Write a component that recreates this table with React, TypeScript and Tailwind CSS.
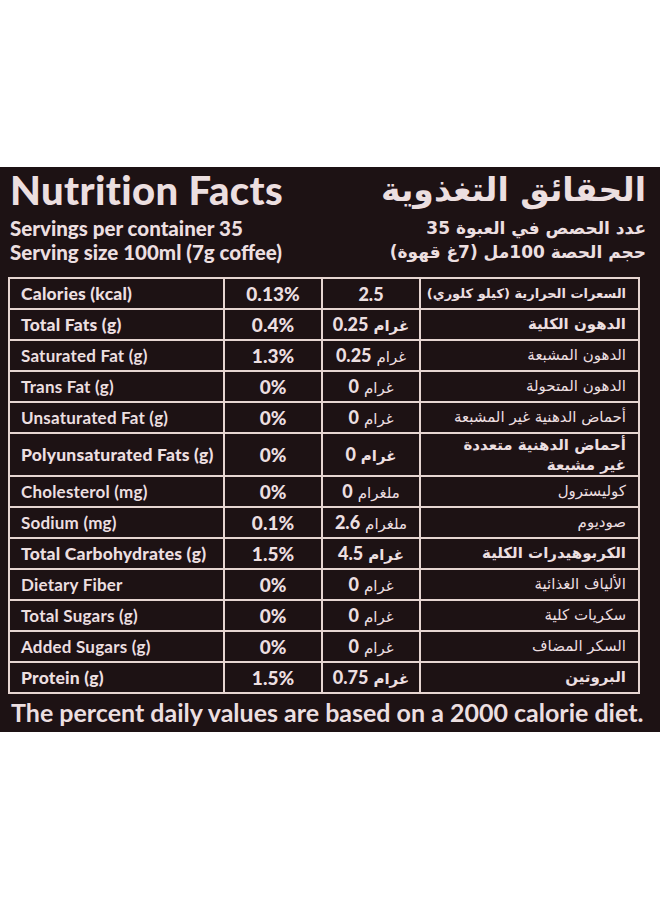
const rows = [
    { en: 'Calories (kcal)', pct: '0.13%', val: '2.5', unit: '', ar: 'السعرات الحرارية (كيلو كلوري)', bold: true },
    { en: 'Total Fats (g)', pct: '0.4%', val: '0.25', unit: 'غرام', ar: 'الدهون الكلية', bold: true },
    { en: 'Saturated Fat (g)', pct: '1.3%', val: '0.25', unit: 'غرام', ar: 'الدهون المشبعة', bold: false },
    { en: 'Trans Fat (g)', pct: '0%', val: '0', unit: 'غرام', ar: 'الدهون المتحولة', bold: false },
    { en: 'Unsaturated Fat (g)', pct: '0%', val: '0', unit: 'غرام', ar: 'أحماض الدهنية غير المشبعة', bold: false },
    { en: 'Polyunsaturated Fats (g)', pct: '0%', val: '0', unit: 'غرام', ar: 'أحماض الدهنية متعددة غير مشبعة', bold: true, tall: true },
    { en: 'Cholesterol (mg)', pct: '0%', val: '0', unit: 'ملغرام', ar: 'كوليسترول', bold: false },
    { en: 'Sodium (mg)', pct: '0.1%', val: '2.6', unit: 'ملغرام', ar: 'صوديوم', bold: false },
    { en: 'Total Carbohydrates (g)', pct: '1.5%', val: '4.5', unit: 'غرام', ar: 'الكربوهيدرات الكلية', bold: true },
    { en: 'Dietary Fiber', pct: '0%', val: '0', unit: 'غرام', ar: 'الألياف الغذائية', bold: false },
    { en: 'Total Sugars (g)', pct: '0%', val: '0', unit: 'غرام', ar: 'سكريات كلية', bold: false },
    { en: 'Added Sugars (g)', pct: '0%', val: '0', unit: 'غرام', ar: 'السكر المضاف', bold: false },
    { en: 'Protein (g)', pct: '1.5%', val: '0.75', unit: 'غرام', ar: 'البروتين', bold: true },
];

const latin = { fontFamily: 'Lato, "DejaVu Sans", sans-serif' };
const arabic = { fontFamily: '"DejaVu Sans", sans-serif' };

export default function App() {
    return (
        <div className="w-[660px] h-[900px] bg-white pt-[167px]">
            <div className="h-[565px] overflow-hidden bg-[#1d1214] text-[#ecdfe0]">
                {/* header */}
                <div className="flex justify-between px-[10px] pt-[1px]">
                    <div style={latin}>
                        <div className="text-[40px] font-black leading-[44px] tracking-[0.4px]">Nutrition Facts</div>
                        <div className="mt-[4px] text-[20.5px] font-black leading-[24px]">Servings per container 35</div>
                        <div className="text-[20.5px] font-black leading-[24px]">Serving size 100ml (7g coffee)</div>
                    </div>
                    <div dir="rtl" style={arabic} className="pr-[4px]">
                        <div className="text-[33px] font-bold leading-[44px]">الحقائق التغذوية</div>
                        <div className="mt-[4px] text-[17px] font-bold leading-[24px]">عدد الحصص في العبوة 35</div>
                        <div className="text-[17px] font-bold leading-[24px]">حجم الحصة 100مل (7غ قهوة)</div>
                    </div>
                </div>

                {/* table */}
                <table className="mx-[8px] mt-[13px] w-[630px] table-fixed border-collapse border-2 border-[#e6d5d1]">
                    <colgroup>
                        <col className="w-[215px]" />
                        <col className="w-[98px]" />
                        <col className="w-[98px]" />
                        <col className="w-[219px]" />
                    </colgroup>
                    <tbody>
                        {rows.map((r) => (
                            <tr key={r.en} className={r.tall ? 'h-[43px]' : 'h-[31px]'}>
                                <td
                                    style={latin}
                                    className={`border-2 border-[#e6d5d1] pl-[11px] leading-none whitespace-nowrap ${
                                        r.bold ? 'text-[17.5px] font-black tracking-[0.2px]' : 'text-[17px] font-bold tracking-[0.2px]'
                                    }`}
                                >
                                    {r.en}
                                </td>
                                <td style={latin} className="border-2 border-[#e6d5d1] text-center text-[19px] font-black leading-none">
                                    {r.pct}
                                </td>
                                <td className="border-2 border-[#e6d5d1] text-center leading-none whitespace-nowrap">
                                    <span style={latin} className="text-[18px] font-black">
                                        {r.val}
                                    </span>
                                    {r.unit && (
                                        <span style={arabic} className={`ml-[5px] text-[15px] ${r.bold ? 'font-bold' : 'font-normal'}`}>
                                            {r.unit}
                                        </span>
                                    )}
                                </td>
                                <td
                                    dir="rtl"
                                    style={arabic}
                                    className={`border-2 border-[#e6d5d1] pr-[12px] whitespace-nowrap ${
                                        r.bold ? 'font-bold' : 'font-normal'
                                    } ${r.tall ? 'leading-[20px]' : 'leading-none'} ${r.unit ? 'text-[15px]' : 'text-[13px]'}`}
                                >
                                    {r.tall ? (
                                        <>
                                            <div>أحماض الدهنية متعددة</div>
                                            <div>غير مشبعة</div>
                                        </>
                                    ) : (
                                        r.ar
                                    )}
                                </td>
                            </tr>
                        ))}
                    </tbody>
                </table>

                {/* footer */}
                <div style={latin} className="mt-[3px] pl-[11px] text-[25px] font-bold leading-[30px] whitespace-nowrap">
                    The percent daily values are based on a 2000 calorie diet.
                </div>
            </div>
        </div>
    );
}
